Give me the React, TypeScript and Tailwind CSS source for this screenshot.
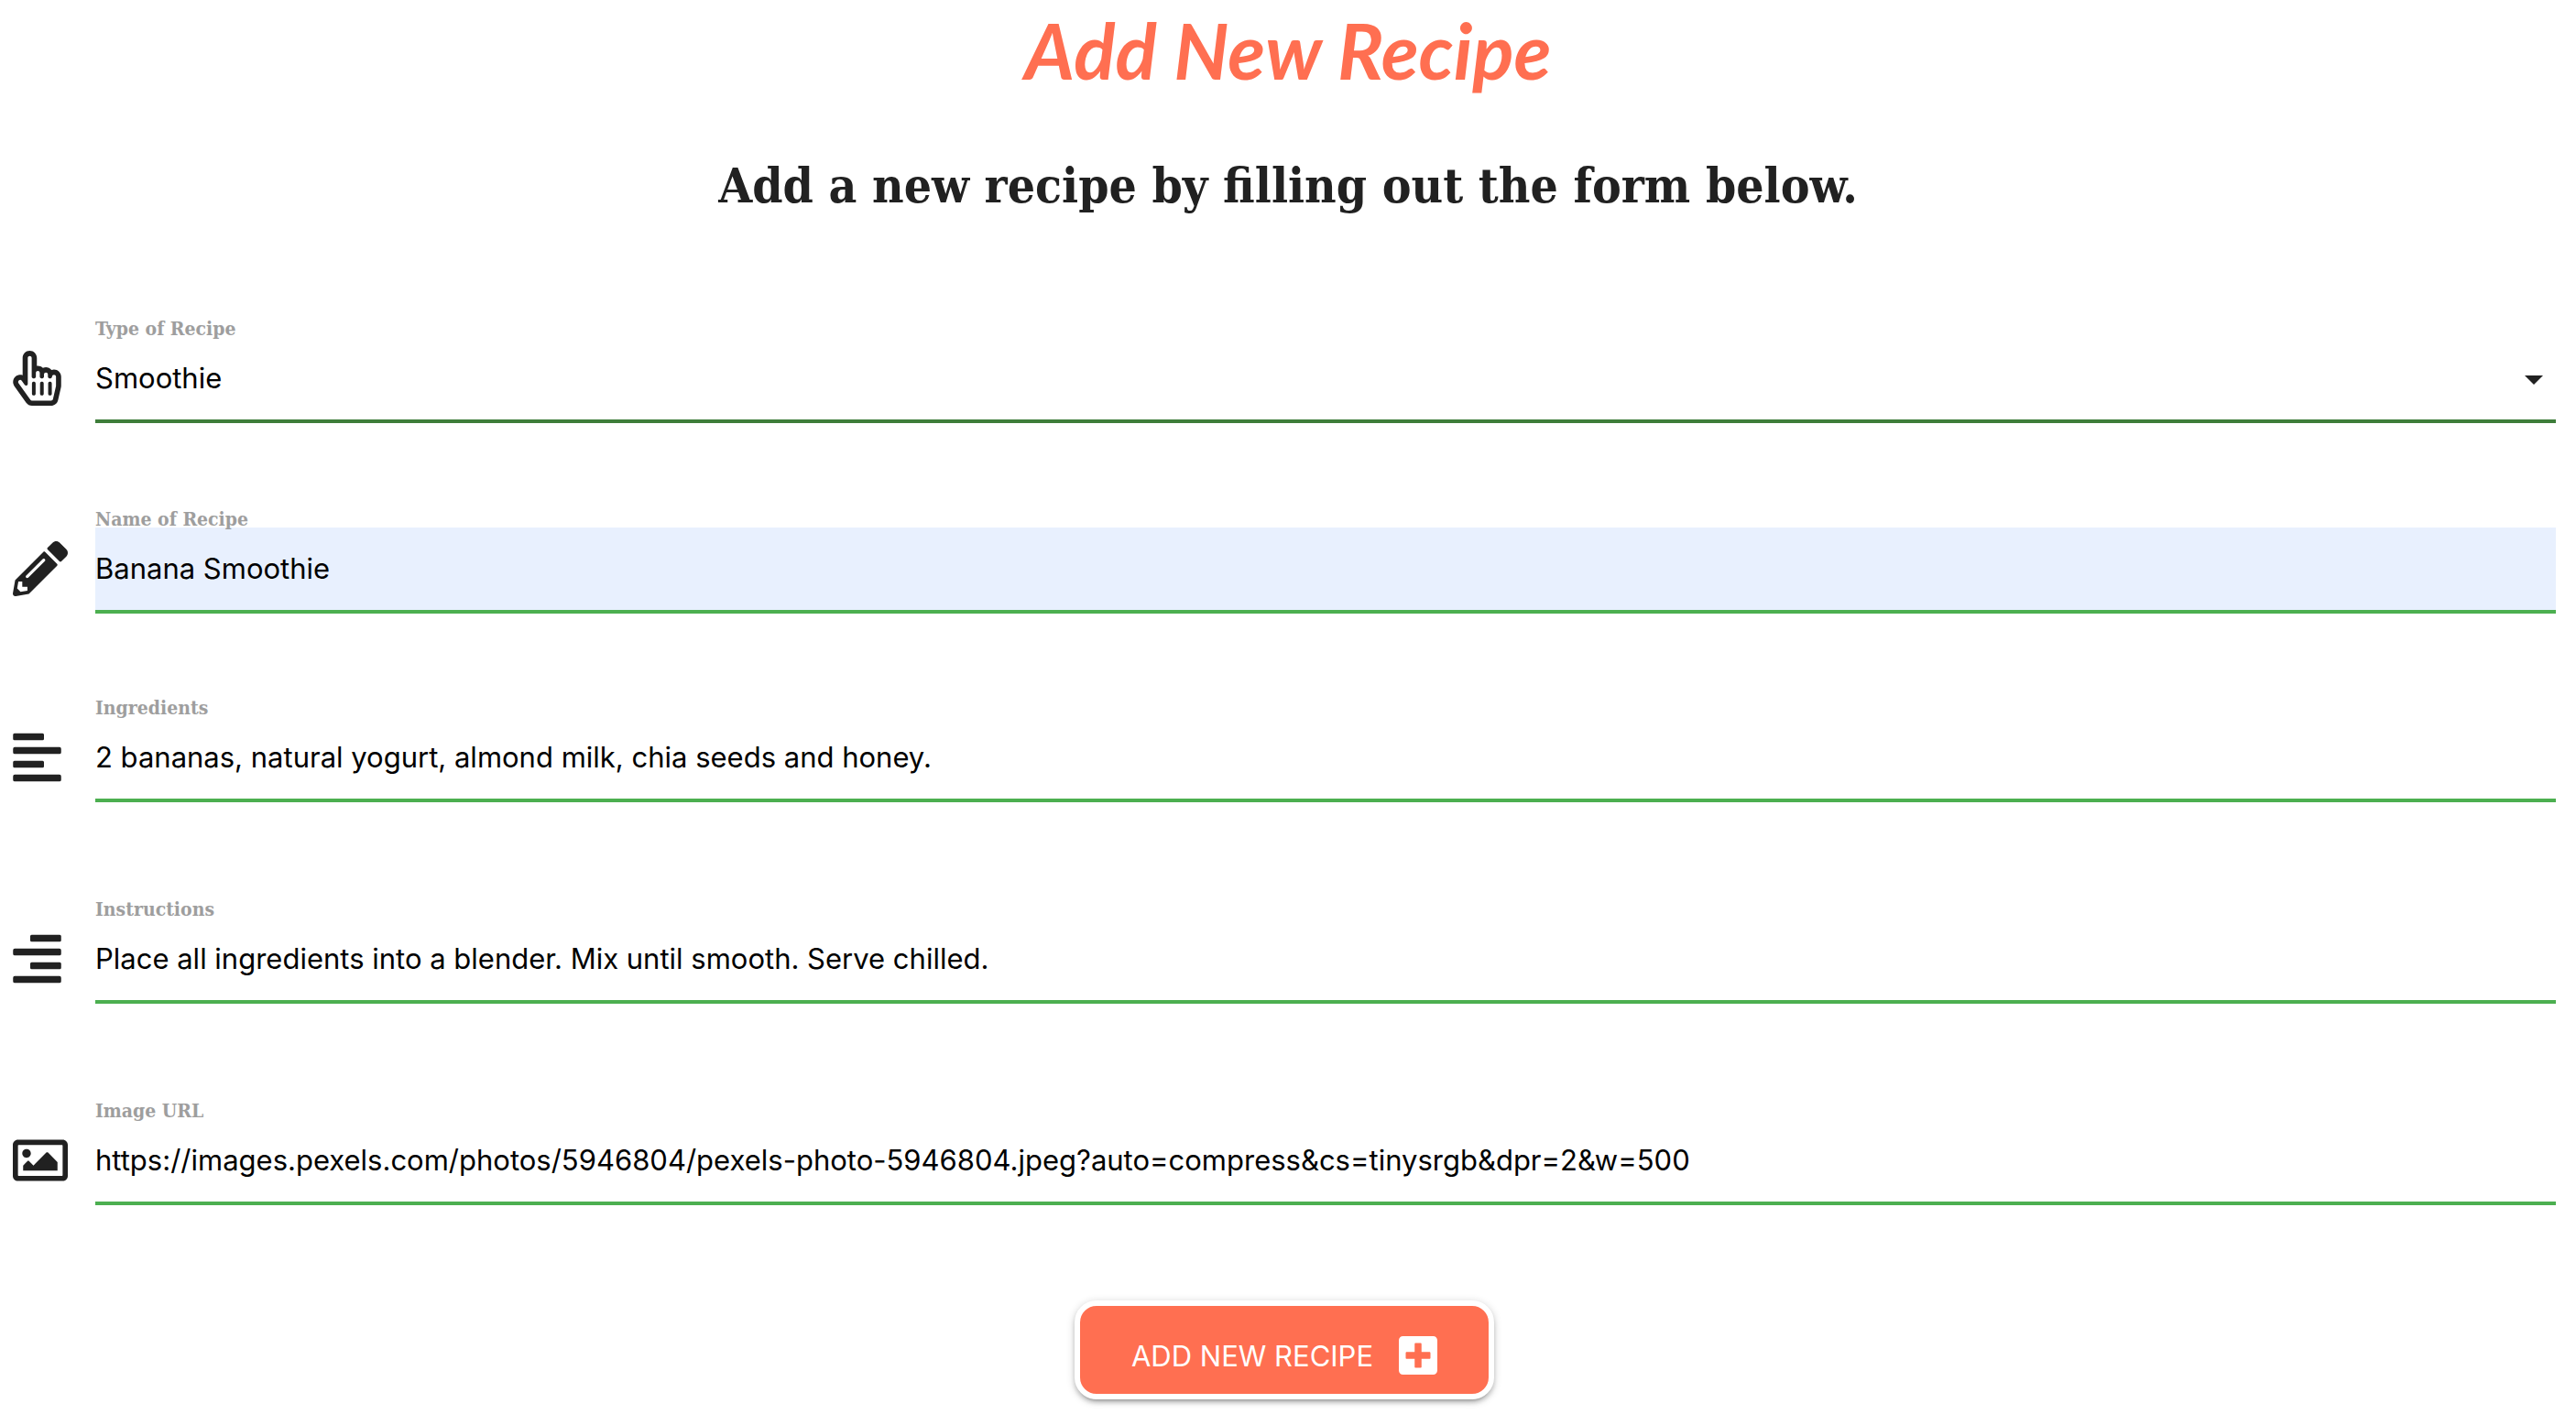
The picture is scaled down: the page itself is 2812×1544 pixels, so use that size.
import type { ReactNode } from "react";
import {
  FaAlignLeft,
  FaAlignRight,
  FaPencilAlt,
  FaPlusSquare,
  FaRegHandPointer,
  FaRegImage,
} from "react-icons/fa";

const control =
  "block h-[94px] w-full appearance-none rounded-none border-b-4 px-0 font-['Inter',sans-serif] text-[31px] text-black outline-none";

function Field({
  id,
  label,
  icon,
  children,
}: {
  id: string;
  label: string;
  icon: ReactNode;
  children: ReactNode;
}) {
  return (
    <div className="flex items-end">
      <div className="flex h-[94px] w-[90px] shrink-0 items-center pb-1">{icon}</div>
      <div className="min-w-0 flex-1">
        <label
          htmlFor={id}
          className="block pt-[6px] font-['DejaVu_Serif_Condensed','DejaVu_Serif',serif] text-[21px] leading-[18px] font-bold text-[#9e9e9e]"
        >
          {label}
        </label>
        {children}
      </div>
    </div>
  );
}

export default function App() {
  return (
    <main className="bg-white pb-4 text-[#212121]">
      <h1 className="text-center font-['Lato',sans-serif] text-[84px] leading-[110px] font-bold text-[#ff6f51] italic">
        Add New Recipe
      </h1>
      <h2 className="mt-12 text-center font-['DejaVu_Serif_Condensed','DejaVu_Serif',serif] text-[53px] leading-[88px] font-bold">
        Add a new recipe by filling out the form below.
      </h2>
      <form className="mt-[98px] pr-[22px] pl-[14px]" onSubmit={(e) => e.preventDefault()}>
        <Field id="type" label="Type of Recipe" icon={<FaRegHandPointer className="h-[60px] w-[53px]" />}>
          <div className="relative">
            <select id="type" defaultValue="Smoothie" className={`${control} border-[#3e7d3a] bg-transparent`}>
              <option>Smoothie</option>
              <option>Juice</option>
            </select>
            <svg
              viewBox="0 0 20 10"
              className="pointer-events-none absolute top-[42px] right-[14px] h-[10px] w-[20px]"
              fill="currentColor"
              aria-hidden="true"
            >
              <path d="M0 0h20L10 10z" />
            </svg>
          </div>
        </Field>
        <div className="mt-[90px]">
          <Field id="name" label="Name of Recipe" icon={<FaPencilAlt className="size-[60px]" />}>
            <input
              id="name"
              defaultValue="Banana Smoothie"
              className={`${control} border-[#4caf50] bg-[#e8f0fe] pb-[2px]`}
            />
          </Field>
        </div>
        <div className="mt-[88px]">
          <Field id="ingredients" label="Ingredients" icon={<FaAlignLeft className="h-[60px] w-[53px]" />}>
            <input
              id="ingredients"
              defaultValue="2 bananas, natural yogurt, almond milk, chia seeds and honey."
              className={`${control} border-[#4caf50] bg-transparent pb-[2px]`}
            />
          </Field>
        </div>
        <div className="mt-[102px]">
          <Field id="instructions" label="Instructions" icon={<FaAlignRight className="h-[60px] w-[53px]" />}>
            <input
              id="instructions"
              defaultValue="Place all ingredients into a blender. Mix until smooth. Serve chilled."
              className={`${control} border-[#4caf50] bg-transparent pb-[2px]`}
            />
          </Field>
        </div>
        <div className="mt-[102px]">
          <Field id="image" label="Image URL" icon={<FaRegImage className="size-[60px]" />}>
            <input
              id="image"
              defaultValue="https://images.pexels.com/photos/5946804/pexels-photo-5946804.jpeg?auto=compress&cs=tinysrgb&dpr=2&w=500"
              className={`${control} border-[#4caf50] bg-transparent pb-[2px]`}
            />
          </Field>
        </div>
        <div className="mt-[104px] flex justify-center">
          <button
            type="submit"
            className="flex h-[108px] items-center gap-[28px] rounded-3xl border-6 border-white bg-[#ff6f51] px-[56px] pt-3 font-['Inter',sans-serif] text-[31px] text-white shadow-[0_4px_4px_rgba(0,0,0,0.14),0_6px_2px_-4px_rgba(0,0,0,0.12),0_2px_10px_rgba(0,0,0,0.2)]"
          >
            <span className="pt-[3px]">ADD NEW RECIPE</span>
            <FaPlusSquare className="h-[48px] w-[42px]" />
          </button>
        </div>
      </form>
    </main>
  );
}
